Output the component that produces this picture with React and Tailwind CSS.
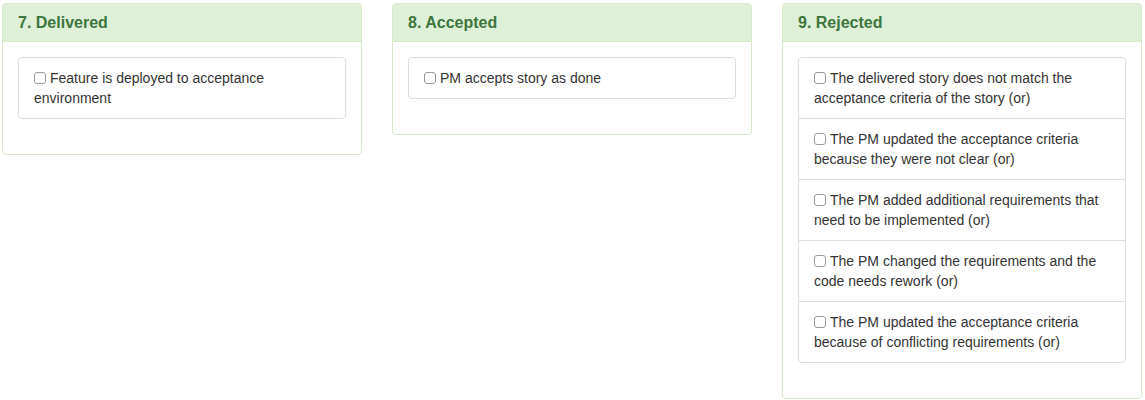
export default function App() {
  const columns = [
    {
      title: '7. Delivered',
      items: [['Feature is deployed to acceptance', 'environment']]
    },
    {
      title: '8. Accepted',
      items: [['PM accepts story as done']]
    },
    {
      title: '9. Rejected',
      items: [
        ['The delivered story does not match the', 'acceptance criteria of the story (or)'],
        ['The PM updated the acceptance criteria', 'because they were not clear (or)'],
        ['The PM added additional requirements that', 'need to be implemented (or)'],
        ['The PM changed the requirements and the', 'code needs rework (or)'],
        ['The PM updated the acceptance criteria', 'because of conflicting requirements (or)']
      ]
    }
  ]

  return (
    <div
      className="flex items-start gap-[30px] pl-[2px] pt-[3px] bg-white text-[14px] leading-[20px] text-[#333]"
      style={{ fontFamily: '"Liberation Sans", Arial, sans-serif' }}
    >
      {columns.map((col) => (
        <div key={col.title} className="w-[360px] border border-[#d6e9c6] rounded-[4px] bg-white">
          <div className="bg-[#dff0d8] border-b border-[#d6e9c6] rounded-t-[3px] px-[15px] py-[10px]">
            <h3 className="text-[16px] leading-[17px] font-bold text-[#3c763d]">{col.title}</h3>
          </div>
          <div className="p-[15px]">
            <ul className="mb-[20px]">
              {col.items.map((lines, i) => (
                <li
                  key={i}
                  className={`border border-[#ddd] px-[15px] py-[10px] -mb-px whitespace-nowrap ${i === 0 ? 'rounded-t-[4px]' : ''} ${i === col.items.length - 1 ? 'rounded-b-[4px] mb-0' : ''}`}
                >
                  <span className="inline-block w-[12px] h-[12px] mr-[4px] align-[-1px] border border-[#9a9a9a] rounded-[3px] bg-white" />
                  {lines[0]}
                  {lines[1] && (
                    <>
                      <br />
                      {lines[1]}
                    </>
                  )}
                </li>
              ))}
            </ul>
          </div>
        </div>
      ))}
    </div>
  )
}
